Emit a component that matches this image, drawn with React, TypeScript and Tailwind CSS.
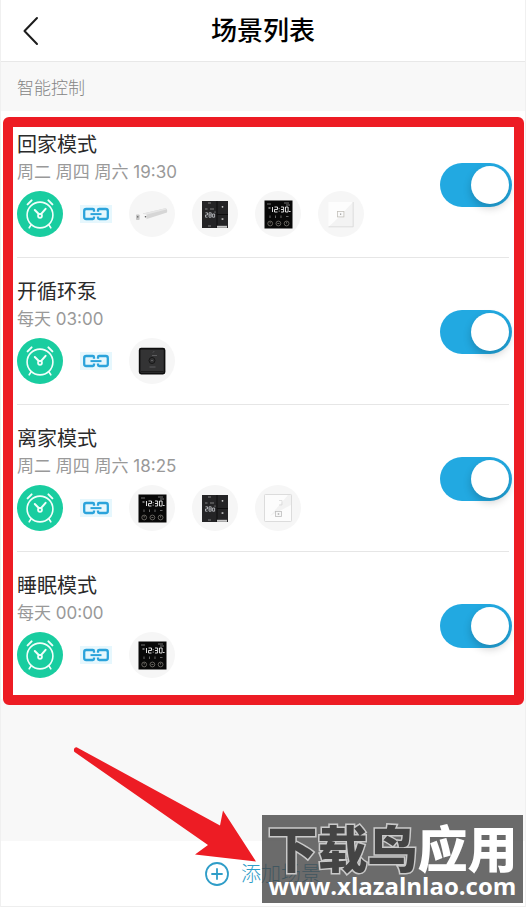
import React from 'react';

type DeviceKind = 'curtain' | 'panel' | 'thermostat' | 'touchSwitch' | 'pump' | 'keySwitch';

interface Scene {
    id: string;
    name: string;
    time: string;
    devices: DeviceKind[];
}

const scenes: Scene[] = [
    { id: 'home', name: '回家模式', time: '周二 周四 周六 19:30', devices: ['curtain', 'panel', 'thermostat', 'touchSwitch'] },
    { id: 'pump', name: '开循环泵', time: '每天 03:00', devices: ['pump'] },
    { id: 'away', name: '离家模式', time: '周二 周四 周六 18:25', devices: ['thermostat', 'panel', 'keySwitch'] },
    { id: 'sleep', name: '睡眠模式', time: '每天 00:00', devices: ['thermostat'] },
];

const AlarmIcon = () => (
    <svg viewBox="0 0 46 46" className="size-[46px] shrink-0" fill="none" stroke="#f2fffb" strokeLinecap="round" strokeLinejoin="round" aria-hidden="true">
        <circle cx="23" cy="23" r="23" fill="#19cda0" stroke="none" />
        <circle cx="23" cy="24" r="12.9" strokeWidth="1.6" />
        <path d="M10.6 13.4l4-4M31.4 9.4l4 4" strokeWidth="2" />
        <path d="M14.2 33.8l-2 3M31.8 33.8l2 3" strokeWidth="1.6" />
        <path d="M17.8 19l4.2 4.2M28.6 17.8l-4.6 5.4" strokeWidth="2" />
        <circle cx="23" cy="24.8" r="2" strokeWidth="1.7" />
    </svg>
);

const LinkIcon = () => (
    <svg viewBox="0 0 32 18" className="h-[18px] w-8 shrink-0" fill="none" stroke="#2ba3db" strokeWidth="2.3" strokeLinejoin="round" aria-hidden="true">
        <rect width="32" height="18" fill="#e6f7fd" stroke="none" />
        <path d="M14 6.8V5.2Q14 4 12.8 4H6.2Q4.2 4 4.2 6V12Q4.2 14 6.2 14H12.8Q14 14 14 12.8V11.4" />
        <path d="M18 6.8V5.2Q18 4 19.2 4H25.8Q27.8 4 27.8 6V12Q27.8 14 25.8 14H19.2Q18 14 18 12.8V11.4" />
        <path d="M10.5 9.1H21.5" strokeWidth="2" />
    </svg>
);

const shapes: Record<DeviceKind, React.ReactNode> = {
    curtain: (
        <>
            <path d="M14 22.5L36.5 17.3Q38.8 18.2 38 21.5L17 28.2L13 27Z" fill="#d6d6d6" />
            <path d="M14 22.5L36.5 17.3L37.5 18.5L16 24Z" fill="#e6e6e6" />
            <path d="M12.5 22.8L17.5 23.4V28.4L12.5 27.8Z" fill="#f7f7f7" />
            <rect x="7" y="23.5" width="3.6" height="5.5" rx="0.8" fill="#c4c4c4" />
            <rect x="8" y="25" width="1.4" height="1.6" fill="#777" />
            <circle cx="16.5" cy="25.8" r="0.8" fill="#555" />
        </>
    ),
    panel: (
        <>
            <rect x="10" y="10" width="26" height="27" fill="#242426" />
            <path d="M25 10V37M25 23.5H36" stroke="#0c0c0c" strokeWidth="0.9" />
            <rect x="25" y="34.8" width="10" height="2" fill="#c9c9c9" />
            <path d="M13 18h2.5M18 18h4M16 12h3M16 35h3" stroke="#9a9a9a" strokeWidth="0.8" />
            <path d="M13.5 21.8h2v2.2h-2v2.2h2M17 21.8h2.2v4.4H17zM17 24h2.2M20.6 23h2v3.2h-2z" stroke="#c6c9ce" strokeWidth="0.8" fill="none" />
            <circle cx="23" cy="21" r="0.5" fill="#bbb" />
            <circle cx="30.5" cy="15.8" r="0.9" fill="#cfcfcf" />
            <rect x="29.6" y="27.3" width="1.8" height="1.5" fill="#cfcfcf" />
        </>
    ),
    thermostat: (
        <>
            <rect x="9.5" y="9.5" width="28" height="28" fill="#080808" />
            <path d="M12 13h4M29 12h5M31 14h4" stroke="#8e8e8e" strokeWidth="0.8" />
            <path d="M13.5 17h2M17.5 16v5M19.5 16h3v2.5h-3V21h3M26 16h2.6v2.5H26M28.6 18.5V21H26M30.5 16h2.6v5h-2.6zM34 20.5h1.6" stroke="#f4f4f4" strokeWidth="0.9" fill="none" />
            <path d="M24.2 17.3v.8M24.2 19.7v.8" stroke="#fff" strokeWidth="0.9" />
            <path d="M15 24.5v2.5M20.5 24.5v2.5M26 24.5v2.5M31 25.5h2.5" stroke="#666" strokeWidth="1" />
            <g fill="none" stroke="#8a857e" strokeWidth="0.7">
                <circle cx="15.2" cy="32.5" r="2.4" />
                <circle cx="23.4" cy="32.5" r="2.4" />
                <circle cx="31.6" cy="32.5" r="2.4" />
                <path d="M15.2 30.8v1.8M22.4 32.5h2M31.6 30.8v1.8" />
            </g>
        </>
    ),
    touchSwitch: (
        <>
            <rect x="10.5" y="11" width="25" height="25" fill="#fdfdfd" />
            <path d="M35 11L35.5 35.5H11L20 27Z" fill="#f3f3f3" />
            <path d="M10.5 35.8H35.2V11" fill="none" stroke="#d8d8d8" strokeWidth="0.9" />
            <rect x="19.5" y="20.5" width="6.4" height="5.4" fill="#fafafa" stroke="#c3c0ba" strokeWidth="0.8" />
            <path d="M22.7 22.4v1.6" stroke="#999" strokeWidth="1" />
        </>
    ),
    pump: (
        <>
            <rect x="10.6" y="10.6" width="25" height="25" rx="1.6" fill="#333334" stroke="#0e0e0e" strokeWidth="1.6" />
            <path d="M12 33.5H34.5" stroke="#1b1b1b" strokeWidth="1" />
            <circle cx="23" cy="22.5" r="3" fill="none" stroke="#161616" strokeWidth="1" />
            <path d="M23 17.5h5M24 14.5l1-1.2M20.5 29h6M22 22.5h2" stroke="#68686b" strokeWidth="0.8" />
        </>
    ),
    keySwitch: (
        <>
            <rect x="9.5" y="9.5" width="27" height="27" rx="0.8" fill="#fcfcfc" stroke="#d8d8d8" strokeWidth="0.9" />
            <path d="M36 10V20L15 31L33 10Z" fill="#f2f2f2" />
            <path d="M24 15.5h3v4.5h-3" fill="none" stroke="#d6d6d6" strokeWidth="0.7" />
            <rect x="20.5" y="26.5" width="6" height="5" fill="#f8f8f8" stroke="#bdbdbd" strokeWidth="0.8" />
            <circle cx="23.5" cy="29" r="0.9" fill="#bbb" />
        </>
    ),
};

const Device: React.FC<{ kind: DeviceKind }> = ({ kind }) => (
    <svg viewBox="0 0 46 46" className="size-[46px] shrink-0" aria-hidden="true">
        <circle cx="23" cy="23" r="23" fill="#f6f6f6" />
        {shapes[kind]}
    </svg>
);

const SceneRow: React.FC<{ scene: Scene }> = ({ scene }) => (
    <li className="mx-4 flex items-center justify-between border-b border-[#e6e6e6] pt-[21px] pb-5 last:border-transparent">
        <div>
            <label htmlFor={scene.id} className="block text-[20px] leading-[27px] text-[#2b2b2b]">
                {scene.name}
            </label>
            <p className="text-[17px] leading-[27px] text-[#999999]">{scene.time}</p>
            <div className="mt-[5px] flex items-center gap-[17px]">
                <AlarmIcon />
                <LinkIcon />
                {scene.devices.map((kind) => (
                    <Device key={kind} kind={kind} />
                ))}
            </div>
        </div>
        <input
            id={scene.id}
            type="checkbox"
            role="switch"
            defaultChecked
            className="-mr-[3px] flex h-11 w-[72px] shrink-0 cursor-pointer appearance-none items-center rounded-full bg-[#d8d8d8] p-[3px] before:size-[38px] before:rounded-full before:bg-white before:shadow-[0_4px_8px_rgba(0,0,0,0.2)] checked:justify-end checked:bg-[#22a9e1]"
        />
    </li>
);

const Watermark = () => (
    <div className="absolute right-[2px] bottom-1 flex h-[88px] w-[261px] flex-col items-center bg-[#464646]/80">
        <p className="mt-[9px] text-[50px] leading-[52px] font-black whitespace-nowrap text-white">
            <span className="text-[#444] [-webkit-text-stroke:3px_#c9c9c9] [paint-order:stroke_fill]">下载鸟</span>
            应用
        </p>
        <p className="font-['Open_Sans'] text-[24px] leading-5 font-bold whitespace-nowrap text-white">www.xlazalnlao.com</p>
    </div>
);

const App: React.FC = () => {
    return (
        <div className="relative flex min-h-screen flex-col border-x border-[#f0f0f0] bg-[#f8f8f8] font-['Inter','Noto_Sans_CJK_SC',sans-serif]">
            <header className="grid grid-cols-[1fr_auto_1fr] items-center border-b border-[#e8e8e8] bg-white px-5 py-3">
                <button type="button" aria-label="返回" className="justify-self-start">
                    <svg viewBox="0 0 20 30" className="h-[30px] w-5" fill="none" stroke="#1c1c1c" strokeWidth="2" strokeLinecap="round" strokeLinejoin="round">
                        <path d="M16 2L3.5 15L16 28" />
                    </svg>
                </button>
                <h1 className="text-[26px] leading-[37px] font-medium text-black">场景列表</h1>
            </header>

            <main className="flex-1">
                <h2 className="px-4 pt-3 pb-[9px] text-[17px] leading-7 font-light text-[#858585]">智能控制</h2>
                <section className="relative bg-white">
                    <ul>
                        {scenes.map((scene) => (
                            <SceneRow key={scene.id} scene={scene} />
                        ))}
                    </ul>
                    {/* Highlight frame around the list */}
                    <div className="pointer-events-none absolute top-[6px] right-px -bottom-[6px] left-[2px] rounded-md border-10 border-[#ed1c24]" />
                </section>
            </main>

            <footer className="flex justify-center border-b border-[#eeeeee] bg-white pt-[19px] pb-[18px]">
                <button type="button" className="flex items-center gap-3 text-[20px] leading-7 font-light text-[#2f9dc8]">
                    <svg viewBox="0 0 24 24" className="size-6" fill="none" stroke="currentColor" strokeWidth="1.8" strokeLinecap="round" aria-hidden="true">
                        <circle cx="12" cy="12" r="11" />
                        <path d="M12 7v10M7 12h10" />
                    </svg>
                    添加场景
                </button>
            </footer>

            <Watermark />

            {/* Arrow pointing to the add button */}
            <svg viewBox="0 0 184 116" className="pointer-events-none absolute bottom-[44px] left-[72px] h-[116px] w-[184px]" aria-hidden="true">
                <path d="M3.6.2L147 78.5L150 63.5L183 114.5L122 107.5L135 98L1.2 4.8Q0 .6 3.6 .2Z" fill="#ed1c24" />
            </svg>
        </div>
    );
};

export default App;
